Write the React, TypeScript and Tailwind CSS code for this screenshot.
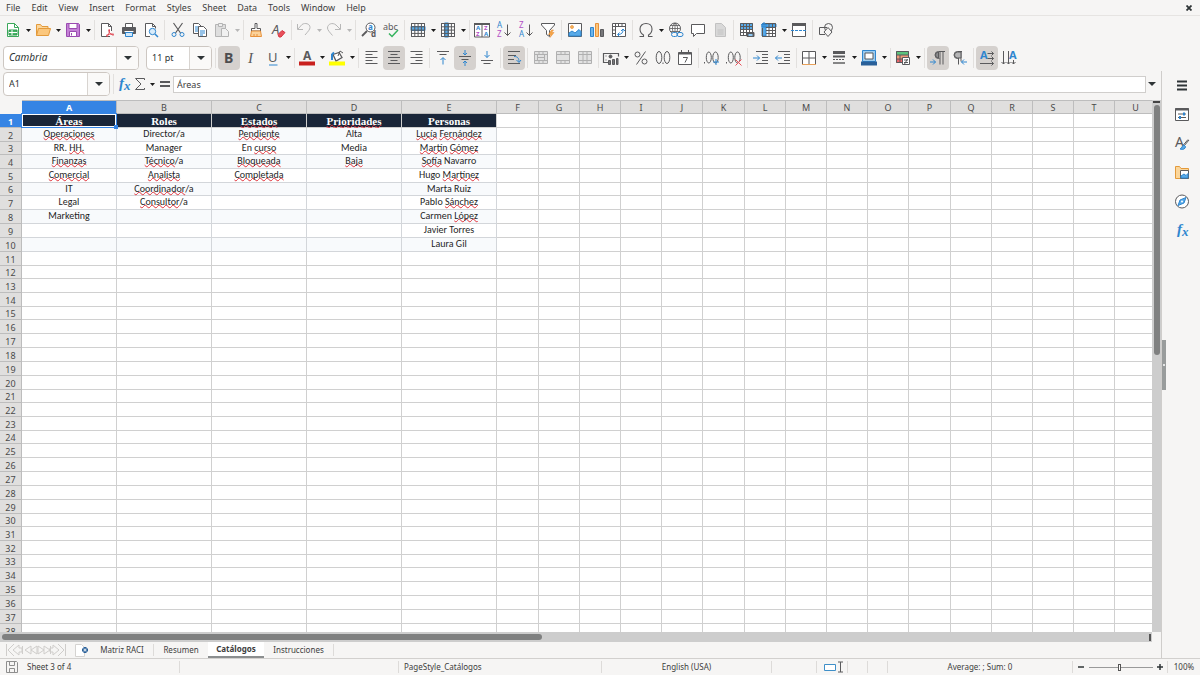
import React from "react";

const MENUS = ["File", "Edit", "View", "Insert", "Format", "Styles", "Sheet", "Data", "Tools", "Window", "Help"];
const COLUMNS = "ABCDEFGHIJKLMNOPQRSTU".split("");
const ROW_COUNT = 38;

// Words wrapped in [] are flagged by the spell checker
const DATA: string[][] = [
  ["[Áreas]", "Roles", "[Estados]", "[Prioridades]", "Personas"],
  ["[Operaciones]", "Director/a", "[Pendiente]", "Alta", "[Lucía] [Fernández]"],
  ["RR. [HH.]", "Manager", "En [curso]", "Media", "[Martín] [Gómez]"],
  ["[Finanzas]", "[Técnico]/a", "[Bloqueada]", "[Baja]", "[Sofía] Navarro"],
  ["[Comercial]", "[Analista]", "[Completada]", "", "Hugo [Martínez]"],
  ["IT", "[Coordinador]/a", "", "", "Marta Ruiz"],
  ["Legal", "[Consultor]/a", "", "", "Pablo [Sánchez]"],
  ["Marketing", "", "", "", "Carmen [López]"],
  ["", "", "", "", "Javier Torres"],
  ["", "", "", "", "Laura Gil"],
];

const INK = "#5a5a5c";
const BLUE = "#2f86cf";
const PURPLE = "#b34fc5";

function Svg({ children }: { children: React.ReactNode }) {
  return (
    <svg viewBox="0 0 16 16" className="w-4 h-4 shrink-0 overflow-visible" fill="none" stroke={INK} strokeWidth="1" aria-hidden="true">
      {children}
    </svg>
  );
}

function Glyph({ x, y, size, color = INK, bold, italic, serif, children }: {
  x: number; y: number; size: number; color?: string; bold?: boolean; italic?: boolean; serif?: boolean; children: string;
}) {
  return (
    <text
      x={x}
      y={y}
      fontSize={size}
      fill={color}
      stroke="none"
      fontWeight={bold ? 700 : 400}
      fontStyle={italic ? "italic" : "normal"}
      fontFamily={serif ? "Liberation Serif, serif" : "Noto Sans, sans-serif"}
    >
      {children}
    </text>
  );
}

const sheetGrid = <path d="M1.5 1.5h13v13h-13zM1.5 4.8h13M1.5 8.1h13M1.5 11.4h13M4.8 1.5v13M8.1 1.5v13M11.4 1.5v13" />;

const icons: Record<string, React.ReactNode> = {
  new: <><path d="M2.500 1.500h7l4 4v9h-11z" fill="#fff" stroke="#3ba85a" /><path d="M9.500 1.500v4h4" stroke="#3ba85a" /><path d="M4 8h8v5H4z" fill="#44b464" stroke="#2f9a4e" /><path d="M4 10.500h8M7 8v5" stroke="#fff" /></>,
  open: <><path d="M1.500 13.500v-11h4l1.500 2h6v3" fill="#fbd69b" stroke="#e39a3b" /><path d="M1.500 13.500l2-7h12l-2 7z" fill="#fbc77d" stroke="#e39a3b" /></>,
  save: <><path d="M1.500 1.500h12l1 1v12h-13z" fill="#c481d6" stroke="#9a4bb0" /><path d="M4 1.500h8v5H4z" fill="#fff" stroke="#9a4bb0" /><path d="M4.500 9.500h7v5h-7z" fill="#fff" stroke="#9a4bb0" /><path d="M6.500 11v2.500" stroke="#9a4bb0" /></>,
  pdf: <><path d="M11 14.500H2.500v-13h7l3 3V9" fill="#fff" /><path d="M9.500 1.500v3h3" /><path d="M8 15c1-2 3-5 2.500-7 0-1-1.200-.5-.8.8.6 2 2.500 4 4.800 4.500M7 13.500c2-1.200 5-2 8-1.200" stroke="#e0434f" /></>,
  print: <><path d="M4.500 5V1.500h7V5" fill="#fff" /><path d="M1.500 5.500h13v6h-13z" fill="#5b5b5e" /><path d="M3.500 9.500h9" stroke="#fff" /><path d="M4.500 10.500h7v4h-7z" fill="#d3e8f8" stroke={BLUE} /></>,
  preview: <><path d="M7 14.500H2.500v-13h7l3 3v2" fill="#fff" /><path d="M9.500 1.500v3h3" /><circle cx="9.500" cy="9.500" r="3.200" fill="#d9ecfa" stroke={BLUE} /><path d="M12 12l3 3" stroke={BLUE} strokeWidth="1.500" /></>,
  cut: <><path d="M3.500 1l7 10M12.500 1l-7 10" strokeWidth="1.200" /><circle cx="4" cy="12.500" r="2" stroke={BLUE} /><circle cx="12" cy="12.500" r="2" stroke={BLUE} /></>,
  copy: <><path d="M1.500 1.500h5l3 3v7h-8z" fill="#fff" /><path d="M3 5h4M3 7h4M3 9h3" stroke={BLUE} /><path d="M6.500 4.500h5l3 3v7h-8z" fill="#fff" /><path d="M8 9h5M8 11h5M8 13h3" stroke={BLUE} /></>,
  paste: <g stroke="#b4b4b4"><path d="M1.500 2.500h10v12h-10z" fill="#dedede" /><path d="M4.500 1.500h4v3h-4z" fill="#eee" /><path d="M7.500 6.500h4l3 3v5h-7z" fill="#f1f1f1" /></g>,
  brush: <><path d="M7 1.500h2v5h3.500v2.500h-9V6.500H7z" fill="#fff" /><path d="M3.500 9h9l1 5.500h-11z" fill="#fbd29a" stroke="#e8913a" /><path d="M6 14v-2M9 14v-2" stroke="#e8913a" /></>,
  clear: <><Glyph x={2} y={12} size={13} italic>A</Glyph><path d="M8 12.500l4-4 3 2-4 4.500H9z" fill="#e8505a" stroke="#d63643" /></>,
  undo: <path d="M1.500 2v5.500H7M2 7l4-4.500c3-2 8-1 8 3 0 2-2 4-5 7.500" stroke="#b7b7b7" />,
  redo: <path d="M14.500 2v5.500H9M14 7L10 3C6.500 0 1.500 2 1.500 6c0 2 2 4 5 7.500" stroke="#b7b7b7" />,
  find: <><circle cx="9.500" cy="5.500" r="4.500" fill="#fff" /><path d="M6 9l-5 5" strokeWidth="1.800" /><Glyph x={7} y={8} size={8} color={BLUE} bold>a</Glyph><Glyph x={10} y={15} size={8} bold>d</Glyph></>,
  spell: <><Glyph x={0} y={8} size={9}>abc</Glyph><path d="M6 11.500l3 3L15 8" stroke="#35b35e" strokeWidth="1.500" /></>,
  rowOp: <><path d="M1.500 1.500h13v13h-13z" fill="#fff" /><path d="M1 4.500h14v4H1z" fill="#58aae8" stroke={BLUE} />{sheetGrid}</>,
  colOp: <><path d="M1.500 1.500h13v13h-13z" fill="#fff" /><path d="M4.500 1h4v14h-4z" fill="#58aae8" stroke={BLUE} />{sheetGrid}</>,
  sort: <><path d="M.5 1.500h15v13.500H.5z" fill="#fff" /><path d="M0 2h16" strokeWidth="2" /><path d="M8 2v13" /><Glyph x={2} y={8} size={6} color={BLUE} bold>A</Glyph><Glyph x={2} y={14} size={6} color={PURPLE} bold>Z</Glyph><Glyph x={10} y={8} size={6} color={PURPLE} bold>Z</Glyph><Glyph x={10} y={14} size={6} color={BLUE} bold>A</Glyph></>,
  az: <><Glyph x={1} y={6} size={8} color={BLUE}>A</Glyph><Glyph x={1} y={15} size={8} color={PURPLE}>Z</Glyph><path d="M11.500 2.500v11M8.500 10.500l3 3 3-3" /></>,
  za: <><Glyph x={1} y={6} size={8} color={PURPLE}>Z</Glyph><Glyph x={1} y={15} size={8} color={BLUE}>A</Glyph><path d="M11.500 2.500v11M8.500 10.500l3 3 3-3" /></>,
  filter: <><path d="M1.500 1.500h13v1.500L9.500 8.500v6l-3-2v-4L1.500 3z" fill="#fff" /><path d="M11.500 8l-3 4.500h2.500l-1 3 4-5h-2.500l2-2.500z" fill="#f6a544" stroke="#e8913a" strokeWidth=".6" /></>,
  image: <><path d="M1.500 1.500h13v13h-13z" fill="#fff" /><circle cx="5" cy="5" r="1.500" fill="#f6b65e" stroke="#e8913a" strokeWidth=".7" /><path d="M2 14v-3l3-2 3 2 4-3.500 2 2V14z" fill="#58aae8" stroke={BLUE} /></>,
  chart: <><path d="M1.500 5.500h3v9h-3z" fill="#6cb5ec" stroke={BLUE} /><path d="M6.500 1.500h3v13h-3z" fill="#fbc67c" stroke="#e8913a" /><path d="M11.500 7.500h3v7h-3z" fill="#77777a" /></>,
  pivot: <><path d="M1.500 1.500h13v13h-13zM1.500 4.500h13M4.500 1.500v13M7.500 1.500v3M11 1.500v3M1.500 8h3M1.500 11.500h3" fill="#fff" /><path d="M7 12.500c3.500 0 5-1.500 5-5M10 9l2-2 2 2M8.500 10.500l-2 2 2 2" stroke={BLUE} /></>,
  omega: <path d="M1.500 14.500h4v-1.500C3 11.500 2 9.500 2 7c0-3.300 2.500-5.500 6-5.500S14 3.700 14 7c0 2.500-1 4.500-3.500 6v1.500h4" strokeWidth="1.100" />,
  link: <><circle cx="7" cy="6.500" r="5.500" fill="#fff" /><path d="M1.500 6.500h11M7 1v11M2.500 3.500h9M2.500 9.500h9M7 1C3.500 4 3.500 9 7 12M7 1c3.500 3 3.500 8 0 11" strokeWidth=".8" /><rect x="3.500" y="10.500" width="6" height="4" rx="2" fill="#f6f5f4" stroke={BLUE} /><rect x="9" y="10.500" width="6" height="4" rx="2" stroke={BLUE} /></>,
  comment: <path d="M1.500 2.500h13v9h-8l-3 3v-3h-2z" fill="#fff" />,
  note: <><path d="M3.500 1.500h6l4 4v9h-10z" fill="#d9d9d9" stroke="#c2c2c2" /><path d="M5.500 8h6M5.500 10h6M5.500 12h6" stroke="#c2c2c2" /></>,
  printArea: <><path d="M1.500 1.500h12v12h-12z" fill="#fff" /><path d="M1 1h13v6H1z" fill="#58aae8" stroke="none" /><path d="M1.500 1.500h12v12h-12zM1.500 4.500h12M1.500 7.500h12M1.500 10.500h12M4.500 1.500v12M7.500 1.500v12M10.500 1.500v12" /><path d="M8 10.500h7v4H8z" fill="#5b5b5e" /><path d="M9.500 13h4" stroke="#8cc8f4" strokeWidth="2" /></>,
  freeze: <><path d="M1.500 1.500h13v13h-13z" fill="#fff" /><path d="M1 2h4v12H1zM1 2h14v3H1z" fill="#58aae8" stroke={BLUE} /><path d="M4.500 1.500h10v13h-13V6M5 5.500h9.500M5 8.500h9.500M5 11.500h9.500M8 2v12M11.500 2v12" /><path d="M3 0v5M.5 2.500h5" stroke={BLUE} /></>,
  split: <><path d="M1.500 1.500h13v13h-13z" fill="#fff" /><path d="M1 2.500h14" strokeWidth="3" /><path d="M0 8.500h16" stroke={BLUE} strokeDasharray="3 1" /></>,
  shapes: <><path d="M7 12.500H1.500v-7H9" /><circle cx="10.500" cy="5.500" r="4" /><path d="M10 5.500l4 4.500-4 4.500L6 10z" fill="#f6f5f4" /></>,
  bold: <Glyph x={3} y={13} size={14} color="#4d4d4f" bold>B</Glyph>,
  italic: <Glyph x={5} y={13} size={15} italic serif>I</Glyph>,
  underline: <><Glyph x={3} y={12} size={13}>U</Glyph><path d="M4 15h8.500" stroke={BLUE} /></>,
  fontColor: <><Glyph x={4} y={10} size={12} bold>A</Glyph><path d="M0 13.500h16" stroke="#c9211e" strokeWidth="4" /></>,
  fill: <><path d="M4 4.500l6-2 3 5-6 3.500z" fill="#fff" strokeWidth="1.300" /><path d="M3 10V4M3 4.500l2-2" stroke={BLUE} strokeWidth="2" /><path d="M9 6l2-5 3 2" /><path d="M0 13.500h16" stroke="#ffff00" strokeWidth="4" /></>,
  left: <path d="M1.500 1.500h12M1.500 4.500h7M1.500 7.500h12M1.500 10.500h7M1.500 13.500h12" />,
  center: <path d="M2 1.500h12M4.500 4.500h7M2 7.500h12M4.500 10.500h7M2 13.500h12" />,
  right: <path d="M2.500 1.500h12M7.500 4.500h7M2.500 7.500h12M7.500 10.500h7M2.500 13.500h12" />,
  top: <><path d="M2 1.500h12M4.500 4.500h7" /><path d="M8 14.500V8M5.500 10L8 7.500l2.500 2.500" stroke={BLUE} /></>,
  middle: <><path d="M2 6.500h12M4.500 9.500h7" /><path d="M8 0v4.500M6 3l2 2 2-2M8 16v-4.500M6 13l2-2 2 2" stroke={BLUE} /></>,
  bottom: <><path d="M2 10.500h12M4.500 13.500h7" /><path d="M8 1v6.500M5.500 5L8 7.500l2.500-2.500" stroke={BLUE} /></>,
  wrap: <><path d="M2 1.500h12M2 5.500h8M2 9.500h6M2 13.500h12" /><path d="M8 6.500c4 0 5 2 5 5.500M10.500 10l2.500 2.500L15 10" stroke={BLUE} /></>,
  merge: <g stroke="#b0b0b0"><path d="M1.500 1.500h13v12h-13z" fill="#e2e2e2" /><path d="M1.500 4.500h13M1.500 10.500h13M6 1.500v3M10 1.500v3M4.500 4.500v6M11.500 4.500v6M6 10.500v3M10 10.500v3M5 7.500h6" /></g>,
  mergeCells: <g stroke="#b0b0b0"><path d="M1.500 1.500h13v12h-13z" fill="#e2e2e2" /><path d="M1.500 4.500h13M1.500 10.500h13M6 1.500v3M10 1.500v3M6 10.500v3M10 10.500v3" /></g>,
  splitCells: <g stroke="#b0b0b0"><path d="M1.500 1.500h13v12h-13z" fill="#e2e2e2" /><path d="M1.500 4.500h13M1.500 10.500h13M6 1.500v12M10 1.500v12" /></g>,
  currency: <><path d="M8 12.500H.5v-9h15v3" strokeWidth="1.200" /><circle cx="7.500" cy="6.500" r="1.500" fill={INK} /><path d="M3 5.500v1M3 9.500v1" /><path d="M5.500 10.500h2v4h-2zM9.500 9.500h2v5h-2zM13.500 8.500h1.500v6h-1.500z" fill="#77777a" /></>,
  percent: <><circle cx="4.500" cy="4.500" r="2.500" /><circle cx="11.500" cy="11.500" r="2.500" /><path d="M12.500 1.500l-9 13" /></>,
  number: <><ellipse cx="4" cy="7.500" rx="2.800" ry="6" /><path d="M8 12.500v1.500" /><ellipse cx="12" cy="7.500" rx="2.800" ry="6" /></>,
  date: <><path d="M1.500 2.500h13v12h-13z" fill="#fff" /><path d="M1.500 3.500h13" strokeWidth="2" /><path d="M4.500 0v3M11.500 0v3M6 7.500h4.500l-2.500 5" /></>,
  addDecimal: <><path d="M.5 12v1.500" /><ellipse cx="4.800" cy="7.500" rx="2.500" ry="5.500" /><ellipse cx="11.500" cy="7.500" rx="2.700" ry="5.500" /><path d="M12 9v6M9 12h6" stroke={BLUE} /></>,
  delDecimal: <><path d="M.5 12v1.500" /><ellipse cx="4.800" cy="7.500" rx="2.500" ry="5.500" /><ellipse cx="11.500" cy="7.500" rx="2.700" ry="5.500" /><path d="M9.500 9.500l6 6M15.500 9.500l-6 6" stroke="#e8505a" /></>,
  indent: <><path d="M3 1.500h12M9 4.500h6M9 7.500h6M9 10.500h6M3 13.500h12" /><path d="M0 8h6.500M4 5.500L6.500 8 4 10.500" stroke={BLUE} /></>,
  outdent: <><path d="M3 1.500h12M9 4.500h6M9 7.500h6M9 10.500h6M3 13.500h12" /><path d="M7 8H.5M3 5.500L.5 8 3 10.500" stroke={BLUE} /></>,
  borders: <><path d="M1.500 1.500h13v13h-13zM8 1.500v13M1.500 8h13" fill="#fff" /><path d="M1 14.500h14" stroke="#e8a15a" /></>,
  lineStyle: <><path d="M2 2.500h12" strokeWidth="3" /><path d="M2 6.500h12" strokeWidth="2" /><path d="M2 9.500h12" strokeDasharray="2 1" /><path d="M2 13h12" strokeWidth="2" stroke="#858585" /></>,
  borderColor: <><path d="M1.500 .5h13v11h-13z" fill="#9dccef" stroke={BLUE} /><path d="M4 3h8v6H4z" fill="#fff" /><path d="M0 13.500h16" stroke="#2a6099" strokeWidth="4" /></>,
  conditional: <><path d="M1 1h13v4H1z" fill="#5cc27c" stroke="none" /><path d="M1 5h13v4H1z" fill="#f19a78" stroke="none" /><path d="M1 9h7v4H1z" fill="#eb666b" stroke="none" /><path d="M1.500 1.500h12v11h-12zM1.500 5h12M1.500 9h12M5 5v8" /><path d="M7.500 7.500h7v7h-7z" fill="#fff" /><path d="M9 10h4M9 12.500h4M12.500 9l-3 5" /></>,
  ltr: <><path d="M15 1.500H8.500a3.500 3.500 0 0 0 0 7h1M10 1.500v13M13 1.500v13" /><path d="M8.500 2a3 3 0 0 0 0 6z" fill="#8c8c8e" /><path d="M0 12h5.500M3 9.500L5.500 12 3 14.500" stroke={BLUE} /></>,
  rtl: <><path d="M10 1.500H5.500a3.500 3.500 0 0 0 0 7h1M6.500 1.500v13M9 1.500v10" /><path d="M5.500 2a3 3 0 0 0 0 6H9V2z" fill="#b5b5b6" /><path d="M15 12H9.500M12 9.500L9.500 12l2.500 2.500" stroke={BLUE} /></>,
  textRight: <><Glyph x={1} y={9} size={11} color={BLUE} bold>A</Glyph><path d="M8.500 3.500h6M8.500 8.500h6M1 13.500h13.500M12.500 1.500l2 2-2 2M12.500 6.500l2 2-2 2M12.500 11.500l2 2-2 2" /></>,
  textDown: <><Glyph x={8} y={9} size={11} color={BLUE} bold>A</Glyph><path d="M2.500 1v13M7.500 1v13M12.500 10v4M.5 12l2 2 2-2M5.500 12l2 2 2-2M10.500 12l2 2 2-2" /></>,
  fx: <><Glyph x={3} y={12} size={15} color={BLUE} italic serif bold>f</Glyph><Glyph x={8} y={14} size={13} color={BLUE} italic serif bold>x</Glyph></>,
  sigma: <path d="M12.500 4V2.500h-9L9 8l-5.500 5.500h9V12" />,
  equals: <path d="M3 6h10M3 10h10" strokeWidth="1.800" />,
  menu: <path d="M3 4.500h10M3 8.500h10M3 12.500h10" strokeWidth="1.800" stroke="#2e3436" />,
  properties: <><path d="M1.500 2.500h13v12h-13z" fill="#fff" /><path d="M1 3.500h14" strokeWidth="2" /><path d="M4 8h8M4 11.500h8" /><path d="M10 6.500v3M6 10v3" stroke={BLUE} strokeWidth="2" /></>,
  styles: <><Glyph x={1} y={12} size={14}>A</Glyph><path d="M15 5l-5 6M14 4.500l-5 6" /><path d="M10 10c-2 0-1.500 3-4 4 3 1 5.500 0 5.500-2.500z" fill="#58aae8" stroke={BLUE} /></>,
  gallery: <><path d="M1.500 14.500v-12h4l1.500 2h7.500v10z" fill="#fbd69b" stroke="#e39a3b" /><path d="M6.500 6.500h8v8h-8z" fill="#fff" /><path d="M7 14v-2l3-2 2 1.500 2-2V14z" fill="#58aae8" stroke={BLUE} /></>,
  navigator: <><circle cx="8" cy="8.500" r="6.500" fill="#fff" /><path d="M12 4.500l-2 5.500-6 2.500L6 7z" fill="#58aae8" stroke={BLUE} /><circle cx="8" cy="8.500" r="1" fill="#fff" stroke="none" /></>,
  doc: <><path d="M1.500 2.500h6l3 3v9h-9z" fill="#fff" stroke="#d5d3d1" /><path d="M11 5v6M8 8h6" stroke="#2a6099" strokeWidth="3" /><path d="M11 6.500v3M9.500 8h3" stroke="#fff" /></>,
  disk: <g stroke="#8e8e8e"><path d="M2.500 2.500h10l1 1v10h-11zM5.500 2.500v4h5v-4M5.500 13.500v-4h5v4" /></g>,
};

function Tool({ name, active }: { name: string; active?: boolean }) {
  return (
    <button
      type="button"
      aria-label={name}
      className={`w-[22px] h-6 rounded-sm flex items-center justify-center shrink-0 ${active ? "bg-[#d5d1ce]" : ""}`}
    >
      <Svg>{icons[name]}</Svg>
    </button>
  );
}

function Arrow({ dim }: { dim?: boolean }) {
  return (
    <button type="button" aria-label="More options" className="w-2 h-6 flex items-center justify-center shrink-0">
      <svg viewBox="0 0 5 3" className="w-[5px] h-[3px]" fill={dim ? "#b7b7b7" : "#1c1c1c"} aria-hidden="true"><path d="M0 0h5L2.500 3z" /></svg>
    </button>
  );
}

function Sep({ slim }: { slim?: boolean }) {
  return (
    <div className={`${slim ? "w-1" : "w-[5px]"} h-5 flex justify-center shrink-0`}>
      <div className="w-px bg-[#e2e0de]" />
    </div>
  );
}

function Combo({ label, value, className, italic }: { label: string; value: string; className: string; italic?: boolean }) {
  return (
    <div className={`h-6 flex shrink-0 bg-white border border-[#cdc7c2] rounded-sm overflow-hidden ${className}`}>
      <input
        aria-label={label}
        defaultValue={value}
        className={`min-w-0 flex-1 px-[5px] text-[#2e3436] outline-none ${italic ? "italic text-[10px]" : "text-[9px]"}`}
      />
      <button type="button" aria-label={`${label} list`} className="w-[22px] border-l border-[#d8d4d0] bg-[#faf9f8] flex items-center justify-center">
        <svg viewBox="0 0 8 4" className="w-2 h-1" fill="#2e3436" aria-hidden="true"><path d="M0 0h8L4 4z" /></svg>
      </button>
    </div>
  );
}

function CellText({ value }: { value: string }) {
  return (
    <>
      {value.split(/(\[[^\]]*\])/).map((part, i) =>
        part.startsWith("[") ? (
          <span key={i} className="underline decoration-wavy decoration-[#e0323a] decoration-1 [text-underline-offset:-1px] [text-decoration-skip-ink:none]">
            {part.slice(1, -1)}
          </span>
        ) : (
          part
        )
      )}
    </>
  );
}

function columnWidth(i: number) {
  if (i < 5) return "w-[95px]";
  return i % 5 === 0 ? "w-[42px]" : "w-[41px]";
}

function rowHeight(i: number) {
  return i % 9 === 2 || i % 9 === 5 ? "h-[13px]" : "h-[14px]";
}

function cellStyle(row: number, col: number) {
  if (col > 4 || row > 9) return "border-[#d0d0d0]";
  if (row === 0) return "pt-px bg-[#1a2639] border-[#cfcfcf] text-white font-bold font-['Liberation_Serif',serif] text-[11px]";
  return `font-['Carlito','Lato',sans-serif] text-[10px] ${row % 2 === 1 ? "bg-[#f8fafc] border-[#d3d6da]" : "bg-white border-[#d3d6da]"}`;
}

function Grid() {
  return (
    <table className="table-fixed w-max border-separate border-spacing-0 text-[#1f1f1f]">
      <colgroup>
        <col className="w-[22px]" />
        {COLUMNS.map((c, i) => <col key={c} className={columnWidth(i)} />)}
      </colgroup>
      <thead>
        <tr className="h-[14px] text-[9px] leading-[11px]">
          <th className="w-[22px] p-0 bg-[#f6f5f4]" />
          {COLUMNS.map((c, i) => (
            <th
              key={c}
              scope="col"
              className={`px-0 pb-0 pt-px border-r border-t border-b border-[#bdbdbd] ${columnWidth(i)} ${i === 0 ? "bg-[#3584e4] text-white font-bold" : "bg-[#e0dfde] text-[#4a4a4a] font-normal"}`}
            >
              {c}
            </th>
          ))}
        </tr>
      </thead>
      <tbody>
        {Array.from({ length: ROW_COUNT }).map((_, r) => (
          <tr key={r} className={rowHeight(r)}>
            <th
              scope="row"
              className={`px-0 pb-0 pt-px border-r border-b border-[#bdbdbd] text-[9px] leading-[11px] ${r === 0 ? "bg-[#3584e4] text-white font-bold" : "bg-[#e0dfde] text-[#4a4a4a] font-normal"}`}
            >
              {r + 1}
            </th>
            {COLUMNS.map((c, i) => (
              <td
                key={c}
                className={`relative p-0 border-r border-b text-center align-top whitespace-nowrap leading-[12px] ${cellStyle(r, i)}`}
              >
                {DATA[r] && DATA[r][i] ? <CellText value={DATA[r][i]} /> : null}
                {r === 0 && i === 0 && (
                  <>
                    <div className="absolute inset-0 border border-white outline-1 outline-[#3584e4]" />
                    <div className="absolute -right-[2px] -bottom-[2px] w-1 h-1 bg-[#3584e4] z-10" />
                  </>
                )}
              </td>
            ))}
          </tr>
        ))}
      </tbody>
    </table>
  );
}

function StatusSep() {
  return <div className="w-px h-3 bg-[#dddbd9] shrink-0" />;
}

export default function App() {
  return (
    <div className="h-screen flex flex-col overflow-hidden bg-[#f6f5f4] text-[#3d3d3d] font-['Noto_Sans',sans-serif] text-[9px]">
      <header>
        <nav className="h-4 flex items-center gap-px border-b border-[#e6e4e2] pl-px pr-[6px] text-[9px]">
          {MENUS.map((m) => (
            <button key={m} type="button" className="px-[5px] leading-4">{m}</button>
          ))}
          <button type="button" aria-label="Close" className="ml-auto w-[10px] h-4 flex items-center justify-center">
            <svg viewBox="0 0 6 6" className="w-[6px] h-[6px]" stroke="#2e3436" strokeWidth="1.800" aria-hidden="true"><path d="M.5.5l5 5M5.500.5l-5 5" /></svg>
          </button>
        </nav>

        <div className="h-7 flex items-center pl-[2px]">
          <Tool name="new" /><Arrow /><Tool name="open" /><Arrow /><Tool name="save" /><Arrow /><Sep slim />
          <Tool name="pdf" /><Tool name="print" /><Tool name="preview" /><Sep />
          <Tool name="cut" /><Tool name="copy" /><Tool name="paste" /><Arrow dim /><Sep slim />
          <Tool name="brush" /><Tool name="clear" /><Sep slim />
          <Tool name="undo" /><Arrow dim /><Tool name="redo" /><Arrow dim /><Sep />
          <Tool name="find" /><Tool name="spell" /><Sep />
          <Tool name="rowOp" /><Arrow /><Tool name="colOp" /><Arrow /><Sep slim />
          <Tool name="sort" /><Tool name="az" /><Tool name="za" /><Tool name="filter" /><Sep />
          <Tool name="image" /><Tool name="chart" /><Tool name="pivot" /><Sep />
          <Tool name="omega" /><Arrow /><Tool name="link" /><Tool name="comment" /><Tool name="note" /><Sep />
          <Tool name="printArea" /><Tool name="freeze" /><Arrow /><Tool name="split" /><Sep />
          <Tool name="shapes" />
        </div>

        <div className="h-[27px] flex items-center pl-[3px]">
          <Combo label="Font name" value="Cambria" className="w-[136px] mr-[7px]" italic />
          <Combo label="Font size" value="11 pt" className="w-[66px] mr-px" />
          <Sep />
          <Tool name="bold" active /><Tool name="italic" /><Tool name="underline" /><Arrow /><Sep slim />
          <Tool name="fontColor" /><Arrow /><Tool name="fill" /><Arrow /><Sep />
          <Tool name="left" /><Tool name="center" active /><Tool name="right" /><Sep />
          <Tool name="top" /><Tool name="middle" active /><Tool name="bottom" /><Sep />
          <Tool name="wrap" active /><Sep />
          <Tool name="merge" /><Tool name="mergeCells" /><Tool name="splitCells" /><Sep slim />
          <Tool name="currency" /><Arrow /><Tool name="percent" /><Tool name="number" /><Tool name="date" /><Sep />
          <Tool name="addDecimal" /><Tool name="delDecimal" /><Sep />
          <Tool name="indent" /><Tool name="outdent" /><Sep slim />
          <Tool name="borders" /><Arrow /><Tool name="lineStyle" /><Arrow /><Tool name="borderColor" /><Arrow /><Sep slim />
          <Tool name="conditional" /><Arrow /><Sep />
          <Tool name="ltr" active /><Tool name="rtl" /><Sep />
          <Tool name="textRight" active /><Tool name="textDown" />
        </div>
      </header>

      <div className="flex-1 min-h-0 flex">
        <main className="flex-1 min-w-0 flex flex-col">
          <div className="h-[29px] shrink-0 flex items-center pl-[3px] pb-[3px]">
            <Combo label="Name box" value="A1" className="w-[107px] mr-px" />
            <Sep />
            <button type="button" aria-label="Function wizard" className="w-4"><Svg>{icons.fx}</Svg></button>
            <button type="button" aria-label="Select function" className="w-4"><Svg>{icons.sigma}</Svg></button>
            <Arrow />
            <button type="button" aria-label="Formula" className="w-[17px] flex justify-center"><Svg>{icons.equals}</Svg></button>
            <input aria-label="Input line" defaultValue="Áreas" className="flex-1 min-w-0 h-[17px] bg-white border border-[#d0cecc] px-[3px] text-[9px] outline-none" />
            <button type="button" aria-label="Expand input line" className="w-[15px] h-4 pr-1 flex items-center justify-center">
              <svg viewBox="0 0 8 4" className="w-2 h-1" fill="#2e3436" aria-hidden="true"><path d="M0 0h8L4 4z" /></svg>
            </button>
          </div>

          <div className="flex-1 min-h-0 flex">
            <div className="flex-1 min-w-0 flex flex-col">
              <div className="flex-1 min-h-0 overflow-hidden bg-white"><Grid /></div>
              <div className="h-[10px] shrink-0 bg-[#cdcdcd] flex items-center pl-[2px] pr-px">
                <div className="w-[47%] h-[6px] rounded-full bg-[#7f8080]" />
                <div className="ml-auto w-[2px] h-[7px] bg-[#555]" />
              </div>
            </div>
            <div className="w-[9px] shrink-0 bg-[#cdcdcd] flex flex-col items-center mb-[10px]">
              <div className="w-[7px] h-[2px] mt-px mb-[2px] bg-[#444]" />
              <div className="w-[6px] h-[47%] rounded-full bg-[#7f8080]" />
            </div>
          </div>

          <div className="h-4 shrink-0 flex items-center pl-[6px] text-[8px]">
            <svg viewBox="0 0 60 12" className="w-[60px] h-3" fill="none" stroke="#cfcdcb" aria-hidden="true">
              <path d="M.5 0v12M8 0L2 6l6 6M13 1L7 6l6 5V8h3V4h-3zM16.500 2v8M25 2l-6 4 6 4zM31 2l-6 4 6 4zM32 2l6 4-6 4zM38 2l6 4-6 4zM44.500 2v8M47 1l6 5-6 5V8h-3V4h3zM52 0l6 6-6 6M59.500 0v12" />
            </svg>
            <button type="button" aria-label="Add sheet" className="w-[25px] pl-2"><Svg>{icons.doc}</Svg></button>
            <div className="h-4 flex items-center">
              <button type="button" className="w-[63px] h-3 leading-3 border-r border-[#dddbd9]">Matriz RACI</button>
              <button type="button" className="w-[54px] leading-4">Resumen</button>
              <button type="button" className="w-14 h-4 leading-[14px] bg-white border-b-2 border-[#8b8e8f] font-bold">Catálogos</button>
              <button type="button" className="w-[70px] h-3 leading-3 border-r border-[#dddbd9]">Instrucciones</button>
            </div>
          </div>
        </main>

        <aside className="w-[39px] shrink-0 flex border-l border-[#cfcdcb]">
          <div className="w-1 flex flex-col justify-center">
            <button type="button" aria-label="Hide sidebar" className="w-1 h-[50px] bg-[#999c9c] flex items-center justify-center">
              <span className="w-[2px] h-[2px] rounded-full bg-white" />
            </button>
          </div>
          <div className="flex-1 flex flex-col items-center pt-[2px] pr-[2px] gap-[5px]">
            <Tool name="menu" />
            <Tool name="properties" />
            <Tool name="styles" />
            <Tool name="gallery" />
            <Tool name="navigator" />
            <Tool name="fx" />
          </div>
        </aside>
      </div>

      <footer className="h-[17px] shrink-0 flex items-center border-t border-[#d2d0ce] pl-1 text-[8px]">
        <Svg>{icons.disk}</Svg>
        <span className="w-[159px] pl-[7px]">Sheet 3 of 4</span>
        <StatusSep />
        <span className="w-[218px]" />
        <StatusSep />
        <span className="flex-1 pl-[5px]">PageStyle_Catálogos</span>
        <StatusSep />
        <span className="w-[169px] text-center">English (USA)</span>
        <StatusSep />
        <span className="w-11" />
        <StatusSep />
        <svg viewBox="0 0 30 12" className="w-[30px] h-3" fill="none" aria-hidden="true">
          <path d="M7.500 3.500h11v6h-11z" stroke="#3f8fc8" fill="#fff" />
          <path d="M21 1h5M21 11h5M23.500 1v10" stroke={INK} />
        </svg>
        <StatusSep />
        <span className="w-[19px]" />
        <StatusSep />
        <span className="w-[19px]" />
        <StatusSep />
        <span className="w-[184px] text-center">Average: ; Sum: 0</span>
        <StatusSep />
        <button type="button" aria-label="Zoom out" className="w-4 h-3 flex items-center justify-center">
          <svg viewBox="0 0 6 6" className="w-[6px] h-[6px]" stroke="#2e3436" strokeWidth="1.500" aria-hidden="true"><path d="M0 3h6" /></svg>
        </button>
        <input
          type="range"
          aria-label="Zoom"
          defaultValue={48}
          className="w-16 h-3 appearance-none bg-transparent [&::-webkit-slider-runnable-track]:h-px [&::-webkit-slider-runnable-track]:bg-[#9a9a9a] [&::-webkit-slider-thumb]:appearance-none [&::-webkit-slider-thumb]:w-[3px] [&::-webkit-slider-thumb]:h-[7px] [&::-webkit-slider-thumb]:-mt-[3px] [&::-webkit-slider-thumb]:border [&::-webkit-slider-thumb]:border-[#555] [&::-webkit-slider-thumb]:bg-white"
        />
        <button type="button" aria-label="Zoom in" className="w-[14px] h-3 flex items-center justify-center">
          <svg viewBox="0 0 6 6" className="w-[6px] h-[6px]" stroke="#2e3436" strokeWidth="1.500" aria-hidden="true"><path d="M0 3h6M3 0v6" /></svg>
        </button>
        <StatusSep />
        <span className="w-8 text-center">100%</span>
      </footer>
    </div>
  );
}
